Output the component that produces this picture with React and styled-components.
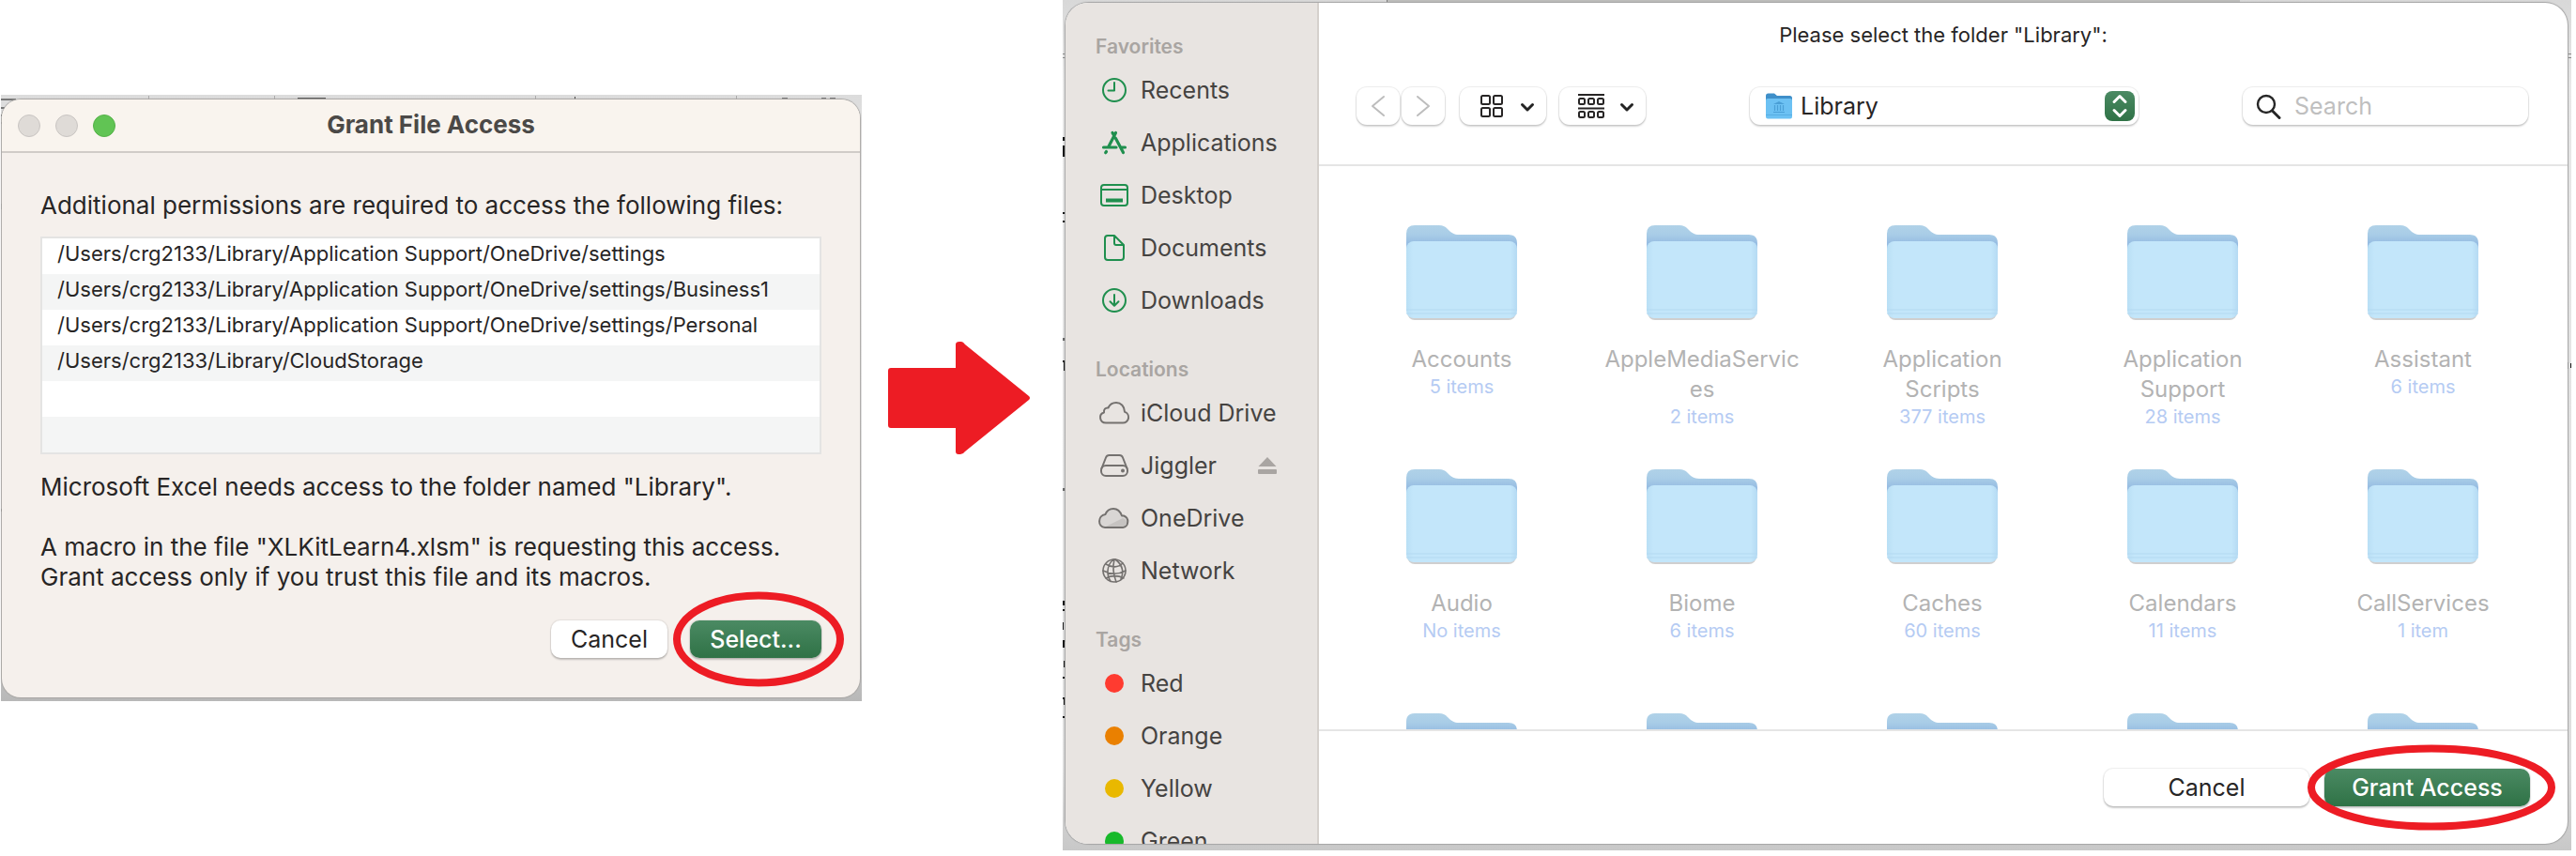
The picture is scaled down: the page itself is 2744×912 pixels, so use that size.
import React from "react";
import styled, { createGlobalStyle } from "styled-components";

const Global = createGlobalStyle`
  *, *::before, *::after { box-sizing: border-box; }
  body { margin: 0; background: #fff; font-family: Inter, "Liberation Sans", sans-serif; color: #272525; }
  button, input, select { font-family: inherit; color: inherit; border: 0; padding: 0; background: none; }
  h1, h2, p, ul { margin: 0; padding: 0; font-weight: 400; }
  ul { list-style: none; }
`;

const Page = styled.main`
  display: flex;
  align-items: flex-start;
  min-height: 912px;
`;

/* ---------- shared parts ---------- */

const PushButton = styled.button`
  position: relative;
  flex: 0 0 ${(p) => p.$width}px;
  height: 40px;
  border-radius: 10px;
  font-size: 25px;
  line-height: 30px;
  font-weight: ${(p) => (p.$primary ? 500 : 400)};
  color: ${(p) => (p.$primary ? "#fff" : "#272525")};
  background: ${(p) => (p.$primary ? "linear-gradient(#4b8a63, #2f7246)" : "#fff")};
  box-shadow: 0 0 1px 1px rgba(0, 0, 0, 0.07), 0 2px 2px rgba(0, 0, 0, 0.2);
`;

const Marked = styled.div`
  position: relative;
  display: flex;
`;

const Ring = styled.svg`
  position: absolute;
  z-index: 2;
  top: 50%;
  left: 52%;
  transform: translate(-50%, -50%);
  pointer-events: none;
  overflow: visible;
`;

function RedRing({ width, height }) {
  return (
    <Ring width={width} height={height} aria-hidden="true">
      <ellipse cx={width / 2} cy={height / 2} rx={width / 2 - 4} ry={height / 2 - 4} fill="none" stroke="#ed1c24" strokeWidth="8" />
    </Ring>
  );
}

/* Slivers of the spreadsheet that show round the edge of a window. */
const Backdrop = styled.svg`
  position: absolute;
  inset: 0;
  width: 100%;
  height: 100%;
`;

const Slivers = ({ marks }) => (
  <>
    {marks.map(([x, y, w, h, fill]) => (
      <rect key={x + "-" + y} x={x} y={y} width={w} height={h} fill={fill} />
    ))}
  </>
);

/* ---------- grant file access dialog ---------- */

const DialogShot = styled.section`
  position: relative;
  flex: 0 1 917px;
  margin: 101px 0 0 1px;
  padding: 5px 2px 4px 1px;
  background: linear-gradient(#dcdcdc, #ededed 20%, #dedede 80%, #b8b8b8);
`;

const Dialog = styled.div`
  position: relative;
  border-radius: 20px;
  background: #f5f0ec;
  box-shadow: 0 0 1px 1px #a9a7a5;
`;

const TitleBar = styled.header`
  display: grid;
  grid-template-columns: 120px 1fr 120px;
  align-items: center;
  height: 57px;
  padding: 0 17px;
  border-bottom: 2px solid #d0ccc8;
  border-radius: 20px 20px 0 0;
  background: #f9f4ee;
`;

const Lights = styled.div`
  display: flex;
  gap: 16px;
`;

const Light = styled.button`
  width: 24px;
  height: 24px;
  border-radius: 50%;
  background: ${(p) => (p.$on ? "#61c454" : "#dfdbd7")};
  border: 1px solid ${(p) => (p.$on ? "#55b148" : "#c9c5c2")};
`;

const DialogTitle = styled.h1`
  font-size: 26px;
  line-height: 32px;
  padding-bottom: 2px;
  font-weight: 700;
  text-align: center;
  color: #4b4947;
`;

const DialogBody = styled.div`
  padding: 40px 41px 42px;
`;

const Line = styled.p`
  font-size: 26px;
  line-height: 32px;
`;

const FileList = styled.ul`
  margin: 17px 0 19px;
  border: 2px solid #e4e4e3;
  background: #fff;
`;

const FileRow = styled.li`
  height: 38px;
  padding: 0 16px;
  font-size: 22px;
  line-height: 32px;
  white-space: nowrap;
  background: ${(p) => (p.$shade ? "#f4f5f5" : "#fff")};
`;

const Spacer = styled.div`
  height: 32px;
`;

const DialogActions = styled.div`
  display: flex;
  justify-content: flex-end;
  gap: 24px;
  margin-top: 30px;
`;

const paths = [
  "/Users/crg2133/Library/Application Support/OneDrive/settings",
  "/Users/crg2133/Library/Application Support/OneDrive/settings/Business1",
  "/Users/crg2133/Library/Application Support/OneDrive/settings/Personal",
  "/Users/crg2133/Library/CloudStorage",
  "",
  "",
];

const dialogMarks = [
  [157, 1, 1, 4, "#aaa"], [291, 1, 1, 4, "#aaa"], [569, 1, 1, 4, "#aaa"], [783, 1, 1, 4, "#aaa"],
  [316, 3, 30, 3, "#555"], [611, 2, 1, 3, "#444"], [832, 3, 6, 2, "#777"], [874, 3, 5, 2, "#777"], [883, 3, 6, 2, "#777"],
  [0, 4, 16, 2, "#777"], [0, 13, 4, 2, "#777"], [0, 21, 2, 2, "#555"], [0, 29, 1, 2, "#555"],
  [0, 116, 1, 6, "#888"], [0, 441, 2, 3, "#111"],
];

function GrantDialog() {
  return (
    <DialogShot>
      <Backdrop aria-hidden="true">
        <Slivers marks={dialogMarks} />
      </Backdrop>
      <Dialog>
        <TitleBar>
          <Lights>
            <Light aria-label="Close" />
            <Light aria-label="Minimize" />
            <Light $on aria-label="Zoom" />
          </Lights>
          <DialogTitle>Grant File Access</DialogTitle>
        </TitleBar>
        <DialogBody>
          <Line>Additional permissions are required to access the following files:</Line>
          <FileList>
            {paths.map((p, i) => (
              <FileRow key={i} $shade={i % 2 === 1}>{p}</FileRow>
            ))}
          </FileList>
          <Line>Microsoft Excel needs access to the folder named "Library".</Line>
          <Spacer />
          <Line>A macro in the file "XLKitLearn4.xlsm" is requesting this access.</Line>
          <Line>Grant access only if you trust this file and its macros.</Line>
          <DialogActions>
            <PushButton $width={124}>Cancel</PushButton>
            <Marked>
              <PushButton $width={140} $primary>Select...</PushButton>
              <RedRing width={182} height={101} />
            </Marked>
          </DialogActions>
        </DialogBody>
      </Dialog>
    </DialogShot>
  );
}

const ArrowSlot = styled.div`
  flex: 0 0 151px;
  margin: 363px 35px 0 28px;
`;

/* ---------- folder picker ---------- */

const PickerShot = styled.section`
  position: relative;
  flex: 1 1 0;
  display: flex;
  min-width: 0;
  margin-right: 5px;
  padding: 3px 4px 7px 3px;
  background: linear-gradient(#d8d8d8, #e8e8e8 10%, #dedede 90%, #c8c8c8);
`;

const Picker = styled.div`
  position: relative;
  flex: 1;
  display: flex;
  min-width: 0;
  height: 896px;
  overflow: hidden;
  border-radius: 24px;
  background: #fff;
  box-shadow: 0 0 1px 1px #a5a5a5;
`;

const Sidebar = styled.nav`
  flex: 0 0 270px;
  padding: 1px 0 0 32px;
  overflow: hidden;
  background: #e8e4e1;
  border-right: 2px solid #d5d0cc;
`;

const SideHeading = styled.h2`
  height: 64px;
  padding-top: 27px;
  font-size: 21px;
  line-height: 38px;
  font-weight: 600;
  color: #a9a5a2;
`;

const SideItem = styled.a`
  display: flex;
  align-items: center;
  height: 56px;
  padding-right: 43px;
  font-size: 25px;
  line-height: 32px;
  color: #454341;
  text-decoration: none;
`;

const SideIcon = styled.span`
  flex: 0 0 40px;
  display: flex;
  justify-content: center;
  margin-right: 8px;
  color: ${(p) => (p.$green ? "#1f8f4e" : "#74716f")};
`;

const SideText = styled.span`
  flex: 1;
  white-space: nowrap;
`;

const Dot = styled.span`
  width: 20px;
  height: 20px;
  border-radius: 50%;
  background: ${(p) => p.$color};
`;

const Content = styled.div`
  flex: 1;
  display: flex;
  flex-direction: column;
  min-width: 0;
`;

const Prompt = styled.h1`
  padding: 19px 0 0;
  font-size: 22px;
  line-height: 30px;
  text-align: center;
`;

const Toolbar = styled.header`
  flex: 0 0 174px;
  border-bottom: 2px solid #e5e5e5;
`;

const Tools = styled.div`
  display: flex;
  align-items: center;
  padding: 41px 42px 0 40px;
`;

const control = `
  height: 40px;
  border-radius: 11px;
  background: #fff;
  box-shadow: 0 0 1px 1px rgba(0, 0, 0, 0.08), 0 2px 2px rgba(0, 0, 0, 0.16);
`;

const NavButton = styled.button`
  ${control}
  flex: 0 0 46px;
  display: flex;
  align-items: center;
  justify-content: center;
  margin-right: 2px;
`;

const MenuButton = styled.button`
  ${control}
  flex: 0 0 92px;
  display: flex;
  align-items: center;
  gap: 16px;
  margin-left: 14px;
  padding-left: 20px;
`;

const LocationBox = styled.div`
  ${control}
  flex: 0 1 414px;
  display: flex;
  align-items: center;
  margin: 0 auto;
  padding: 0 4px 0 16px;
`;

const LocationSelect = styled.select`
  flex: 1;
  height: 40px;
  margin-left: 8px;
  appearance: none;
  font-size: 25px;
  line-height: 32px;
  outline: 0;
`;

const Stepper = styled.span`
  display: flex;
  justify-content: center;
  align-items: center;
  width: 32px;
  height: 32px;
  border-radius: 8px;
  background: linear-gradient(#4b8a63, #2f7246);
`;

const SearchBox = styled.label`
  ${control}
  flex: 0 1 304px;
  min-width: 0;
  display: flex;
  align-items: center;
  gap: 14px;
  padding: 0 14px;
`;

const SearchInput = styled.input`
  flex: 1;
  width: 100%;
  min-width: 0;
  height: 36px;
  font-size: 25px;
  outline: 0;
  &::placeholder { color: #bfbfbf; opacity: 1; }
`;

const Files = styled.ul`
  flex: 1 1 0;
  min-height: 0;
  overflow: hidden;
  display: grid;
  grid-template-columns: repeat(5, 1fr);
  grid-auto-rows: 260px;
  padding: 62px 26px 0 24px;
`;

const FolderCell = styled.li`
  display: flex;
  flex-direction: column;
  align-items: center;
  text-align: center;
`;

const FolderName = styled.span`
  width: 208px;
  margin-top: 24px;
  font-size: 24px;
  line-height: 32px;
  color: #b3b3b3;
  word-break: break-word;
`;

const FolderCount = styled.span`
  font-size: 20px;
  line-height: 26px;
  color: #b5cbf3;
`;

const Footer = styled.footer`
  flex: 0 0 122px;
  display: flex;
  justify-content: flex-end;
  align-items: center;
  gap: 16px;
  padding: 0 40px 0 0;
  border-top: 2px solid #e5e5e5;
`;

/* ---------- drawings ---------- */

const stroke = { fill: "none", stroke: "currentColor", strokeWidth: 2, strokeLinecap: "round", strokeLinejoin: "round" };

const icons = {
  clock: (
    <svg width="28" height="28" {...stroke}><circle cx="14" cy="14" r="12" /><path d="M14 6v8.500H7.500" /></svg>
  ),
  apps: (
    <svg width="28" height="28" {...stroke} strokeWidth="3.200">
      <path d="M15.500 3.500 8 18M12 3.500l2 3.500M15.500 9.500 23.500 24.500M2.500 19H16M21.500 19h4M5.500 23.500l-.8 1.200" />
    </svg>
  ),
  desktop: (
    <svg width="32" height="28" {...stroke}>
      <rect x="2" y="3" width="28" height="22" rx="3" /><path d="M2 8h28" />
      <path d="M7 19.500h18" strokeWidth="4" strokeLinecap="butt" />
    </svg>
  ),
  doc: (
    <svg width="28" height="30" {...stroke}>
      <path d="M7 2h7l10 10v13a3 3 0 0 1-3 3H7a3 3 0 0 1-3-3V5a3 3 0 0 1 3-3zM14 2v8a2 2 0 0 0 2 2h8" />
    </svg>
  ),
  download: (
    <svg width="28" height="28" {...stroke}><circle cx="14" cy="14" r="12" /><path d="M14 8v11.500M9.500 15.200 14 19.700l4.500-4.500" /></svg>
  ),
  cloud: (
    <svg width="34" height="26" {...stroke}>
      <path d="M8 23.500h18a6 6 0 0 0 2-11.700C28 6 24 2 19 2c-4 0-7 2-8.500 5.500C7.500 7 5.500 9.500 6 12.500 0 14 1 23.500 8 23.500z" />
    </svg>
  ),
  drive: (
    <svg width="32" height="26" {...stroke}>
      <path d="M2.500 16 7 4.500A4 4 0 0 1 10.500 2h11A4 4 0 0 1 25 4.500L29.500 16" />
      <rect x="2" y="13" width="28" height="11" rx="5" /><circle cx="25" cy="18.500" r="1" fill="currentColor" />
    </svg>
  ),
  onedrive: (
    <svg width="36" height="24" {...stroke}>
      <path d="M8 22h19a6.500 6.500 0 0 0 1-12.500h-2C24 4 20 2 17 2c-4 0-7 2-8.500 6C0 9 0 22 8 22z" fill="#d9d6d4" />
      <path d="M9 21 27 12a5 5 0 0 1 3 8l-4 1z" fill="#c6c3c1" stroke="none" />
    </svg>
  ),
  globe: (
    <svg width="28" height="28" {...stroke} strokeWidth="1.600">
      <circle cx="14" cy="14" r="12" />
      <path d="M13 2C5 9 6 19 10 25.500M14 2c-2 8-1 16 2 24M15 2c8 6 9 14 6 21M5 7c6 4 13 4 18-1M2 14c8 4 17 4 24 0M5 22c6-3 13-3 19 0" />
    </svg>
  ),
};

const Eject = () => (
  <svg width="20" height="20" fill="#a9a5a2" aria-hidden="true"><path d="M10 1 19.500 11H.5z" /><rect x="0" y="14" width="20" height="5" rx="1" /></svg>
);

const Chevron = ({ d, w, h, color = "#232323", sw = 3 }) => (
  <svg width={w} height={h} fill="none" stroke={color} strokeWidth={sw} strokeLinecap="round" strokeLinejoin="round" aria-hidden="true"><path d={d} /></svg>
);

const Down = () => <Chevron w={16} h={14} d="M2.500 5.500 8 11 13.500 5.500" />;

const GridGlyph = () => (
  <svg width="28" height="26" {...stroke}>
    {[3, 16].map((x) => [2, 15].map((y) => <rect key={x + "-" + y} x={x} y={y} width="9" height="9" rx="1.500" />))}
  </svg>
);

const GroupGlyph = () => (
  <svg width="28" height="28" {...stroke} strokeLinecap="butt">
    <path d="M0 2h28M0 16.500h28" />
    {[1, 11, 21].map((x) => [6, 20].map((y) => <rect key={x + "-" + y} x={x} y={y} width="6" height="6" rx="1.500" />))}
  </svg>
);

const LibraryGlyph = () => (
  <svg width="30" height="30" aria-hidden="true">
    <path d="M1 4a2.500 2.500 0 0 1 2.500-2.500h6.500l3 2.500h13.500a2.500 2.500 0 0 1 2.500 2.500V12H1z" fill="#3f8fc9" />
    <rect x="1" y="7" width="28" height="21.500" rx="2" fill="#6cc1f3" />
    <path d="M1 24.500h28" stroke="#57aee3" />
    <path d="M9 13 15 10l6 3z" fill="#4a9fd6" />
    <path d="M10.500 14v6M13.500 14v6M16.500 14v6M19.500 14v6M9 21.500h12" stroke="#4a9fd6" strokeWidth="1.200" />
  </svg>
);

const SearchGlyph = () => (
  <svg width="27" height="27" fill="none" stroke="#262626" strokeLinecap="round" aria-hidden="true">
    <circle cx="11" cy="11" r="9" strokeWidth="2.400" /><path d="m17.500 18 7.500 7.500" strokeWidth="3" />
  </svg>
);

const FolderArt = () => (
  <svg width="122" height="104" viewBox="0 0 122 104" aria-hidden="true">
    <rect x="3" y="20" width="116" height="82" rx="8" fill="#cfcfcf" />
    <path d="M2 10Q2 1 11 1h26c4 0 6 1 9 4 4 4 7 6 12 6h53q9 0 9 9v20H2z" fill="url(#folderBack)" />
    <rect x="2" y="18" width="118" height="82" rx="8" fill="url(#folderFront)" />
    <path d="M2 91h118M2 95h118" stroke="#b3d9f1" strokeWidth="1" />
  </svg>
);

const Defs = () => (
  <svg width="0" height="0" aria-hidden="true" display="block">
    <defs>
      <linearGradient id="folderBack" x1="0" y1="0" x2="0" y2="1">
        <stop offset="0" stopColor="#b0d2e8" /><stop offset=".25" stopColor="#a9cde7" /><stop offset=".5" stopColor="#96bce2" /><stop offset="1" stopColor="#a4c9e8" />
      </linearGradient>
      <linearGradient id="folderFront" x1="0" y1="0" x2="1" y2="0">
        <stop offset="0" stopColor="#b9dff5" /><stop offset=".06" stopColor="#c3e6fa" /><stop offset=".94" stopColor="#c3e6fa" /><stop offset="1" stopColor="#b5daf3" />
      </linearGradient>
    </defs>
  </svg>
);

/* ---------- data ---------- */

const sections = [
  ["Favorites", [["Recents", "clock"], ["Applications", "apps"], ["Desktop", "desktop"], ["Documents", "doc"], ["Downloads", "download"]]],
  ["Locations", [["iCloud Drive", "cloud"], ["Jiggler", "drive"], ["OneDrive", "onedrive"], ["Network", "globe"]]],
  ["Tags", [["Red", "#ff3b30"], ["Orange", "#ea8000"], ["Yellow", "#e9b800"], ["Green", "#18b92b"]]],
];

const folders = [
  ["Accounts", "5 items"], ["AppleMediaServices", "2 items"], ["Application Scripts", "377 items"], ["Application Support", "28 items"], ["Assistant", "6 items"],
  ["Audio", "No items"], ["Biome", "6 items"], ["Caches", "60 items"], ["Calendars", "11 items"], ["CallServices", "1 item"],
  ["", ""], ["", ""], ["", ""], ["", ""], ["", ""],
];

const pickerMarks = [
  [346, 0, 908, 3, "#bdbdbb"], [345, 0, 1, 3, "#777"],
  [0, 57, 3, 1, "#888"], [0, 61, 3, 1, "#888"],
  [0, 146, 3, 4, "#111"], [0, 155, 3, 12, "#111"],
  [0, 226, 3, 2, "#111"], [0, 235, 3, 2, "#111"],
  [0, 360, 3, 3, "#666"], [0, 384, 3, 2, "#111"], [1, 386, 2, 9, "#111"],
  [0, 520, 3, 3, "#666"], [0, 640, 3, 5, "#111"], [0, 649, 2, 2, "#111"],
  [0, 663, 1, 8, "#111"], [0, 682, 3, 2, "#111"], [0, 684, 2, 6, "#111"],
  [1, 704, 2, 7, "#111"], [0, 721, 2, 2, "#111"], [0, 743, 3, 2, "#111"], [1, 745, 2, 6, "#111"], [0, 763, 2, 2, "#111"],
];

function FolderPicker() {
  return (
    <PickerShot>
      <Backdrop aria-hidden="true">
        <Slivers marks={pickerMarks} />
        <svg x="100%" overflow="visible">
          <Slivers marks={[[-4, 57, 4, 1, "#888"], [-4, 61, 4, 1, "#888"], [-4, 386, 1, 7, "#111"], [-1, 387, 1, 5, "#111"]]} />
        </svg>
      </Backdrop>
      <Picker>
        <Sidebar>
          {sections.map(([heading, items]) => (
            <div key={heading}>
              <SideHeading>{heading}</SideHeading>
              {items.map(([label, icon]) => (
                <SideItem key={label} href="#">
                  <SideIcon $green={heading === "Favorites"}>{icons[icon] || <Dot $color={icon} />}</SideIcon>
                  <SideText>{label}</SideText>
                  {label === "Jiggler" && <Eject />}
                </SideItem>
              ))}
            </div>
          ))}
        </Sidebar>
        <Content>
          <Toolbar>
            <Prompt>Please select the folder "Library":</Prompt>
            <Tools>
              <NavButton aria-label="Back"><Chevron w={18} h={26} d="M15 3 3 13l12 10" color="#bdbdbd" sw={2} /></NavButton>
              <NavButton aria-label="Forward"><Chevron w={18} h={26} d="M3 3l12 10L3 23" color="#bdbdbd" sw={2} /></NavButton>
              <MenuButton aria-label="View as icons"><GridGlyph /><Down /></MenuButton>
              <MenuButton aria-label="Group items"><GroupGlyph /><Down /></MenuButton>
              <LocationBox>
                <LibraryGlyph />
                <LocationSelect aria-label="Location"><option>Library</option></LocationSelect>
                <Stepper><Chevron w={18} h={28} d="M3 9.500 9 3.500l6 6M3 18.500l6 6 6-6" color="#fff" /></Stepper>
              </LocationBox>
              <SearchBox>
                <SearchGlyph />
                <SearchInput type="text" placeholder="Search" aria-label="Search" />
              </SearchBox>
            </Tools>
          </Toolbar>
          <Files>
            {folders.map(([name, count], i) => (
              <FolderCell key={i}>
                <FolderArt />
                <FolderName>{name}</FolderName>
                <FolderCount>{count}</FolderCount>
              </FolderCell>
            ))}
          </Files>
          <Footer>
            <PushButton $width={219}>Cancel</PushButton>
            <Marked>
              <PushButton $width={219} $primary>Grant Access</PushButton>
              <RedRing width={264} height={91} />
            </Marked>
          </Footer>
        </Content>
      </Picker>
    </PickerShot>
  );
}

export default function App() {
  return (
    <>
      <Global />
      <Defs />
      <Page>
        <GrantDialog />
        <ArrowSlot>
          <svg width="151" height="122" aria-hidden="true" display="block">
            <path d="M3 29h69V4q0-3 4-3h2q2 0 4 3l68 55q2 2 0 4L82 118q-2 3-5 3h-2q-3 0-3-3V93H3q-3 0-3-3V32q0-3 3-3z" fill="#ed1c24" />
          </svg>
        </ArrowSlot>
        <FolderPicker />
      </Page>
    </>
  );
}
